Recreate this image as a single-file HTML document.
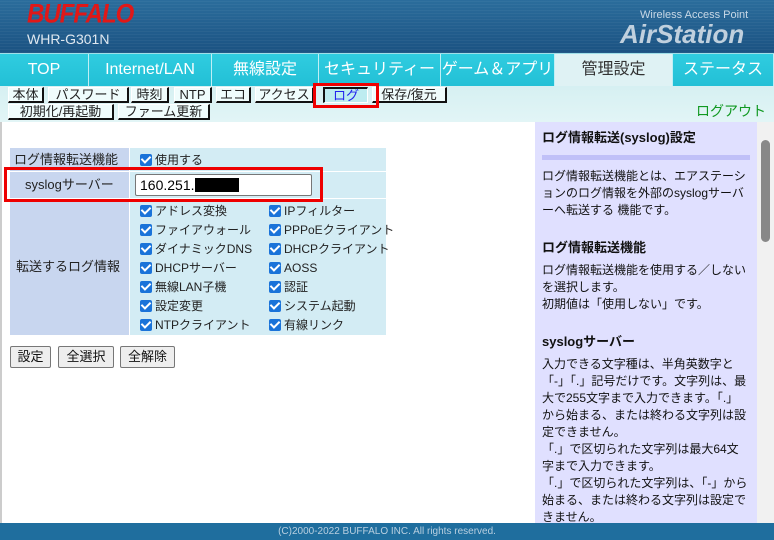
<!DOCTYPE html>
<html><head><meta charset="utf-8"><style>
*{margin:0;padding:0;box-sizing:border-box}
body{width:774px;height:540px;overflow:hidden;position:relative;font-family:"Liberation Sans","Noto Sans CJK JP",sans-serif;background:#fff}
.a{position:absolute}
#hdr{left:0;top:0;width:774px;height:53px;background-image:repeating-linear-gradient(0deg,rgba(255,255,255,.04) 0 1px,transparent 1px 3px),linear-gradient(180deg,#2b6d9c,#1b5282)}
.tab{position:absolute;top:54px;height:32px;background:linear-gradient(#30cce0,#22c0d6);color:#fff;font-size:16px;text-align:center;line-height:32px;border-right:1px solid #bfeff5}
.sb{position:absolute;height:16px;background:#effcfc;border-top:1px solid #fff;border-left:1px solid #fff;border-right:2px solid #111;border-bottom:2px solid #111;font-size:13px;line-height:13px;text-align:center;color:#222;overflow:hidden;white-space:nowrap}
.ck{display:inline-block;width:12px;height:12px;background:#1a73d9;border-radius:2px;vertical-align:-2px;margin-right:3px;position:relative}
.ck:after{content:"";position:absolute;left:3px;top:0px;width:4px;height:7px;border:solid #fff;border-width:0 2px 2px 0;transform:rotate(45deg)}
.it{position:absolute;font-size:12px;line-height:15px;height:15px;color:#222;white-space:nowrap}
.btn{position:absolute;top:346px;height:22px;border:1px solid #777;border-radius:2px;background:#eee;font-size:13px;line-height:20px;text-align:center;color:#111}
#rp{left:535px;top:122px;width:222px;height:401px;overflow:hidden;background:#e0e0ff;font-size:12px;color:#111;padding:0 7px;line-height:17px}
#rp h4{font-size:13px;margin-top:7px;font-weight:bold}
#rp p{margin-top:6px}
</style></head><body>
<div id="hdr" class="a"></div>
<div class="a" style="left:27px;top:1px;color:#e01818;font-size:24px;font-weight:bold;font-style:italic;letter-spacing:-1px;transform:scaleY(1.1)">BUFFALO</div>
<div class="a" style="left:27px;top:31px;color:#dfe8f0;font-size:14px">WHR-G301N</div>
<div class="a" style="left:640px;top:9px;color:#c8d8e6;font-size:11px">Wireless Access Point</div>
<div class="a" style="left:620px;top:19px;color:#c0d0de;font-size:26px;font-weight:bold;font-style:italic">AirStation</div>
<div class="a" style="left:0;top:53px;width:774px;height:1px;background:#9fdfe8"></div>
<div class="tab" style="left:0;width:89px">TOP</div>
<div class="tab" style="left:89px;width:123px">Internet/LAN</div>
<div class="tab" style="left:212px;width:107px">無線設定</div>
<div class="tab" style="left:319px;width:122px">セキュリティー</div>
<div class="tab" style="left:441px;width:114px">ゲーム＆アプリ</div>
<div class="tab" style="left:555px;width:118px;background:#dff2f4;color:#333">管理設定</div>
<div class="tab" style="left:673px;width:101px">ステータス</div>
<div class="a" style="left:0;top:86px;width:774px;height:36px;background:linear-gradient(#d6f0f2,#e2f5f6)"></div>
<div class="sb" style="left:8px;top:87px;width:36px">本体</div>
<div class="sb" style="left:48px;top:87px;width:81px">パスワード</div>
<div class="sb" style="left:131px;top:87px;width:38px">時刻</div>
<div class="sb" style="left:174px;top:87px;width:38px">NTP</div>
<div class="sb" style="left:216px;top:87px;width:35px">エコ</div>
<div class="sb" style="left:255px;top:87px;width:59px">アクセス</div>
<div class="sb" style="left:323px;top:87px;width:45px;background:#bdecf0;border-top:2px solid #111;border-left:2px solid #111;border-right:1px solid #fff;border-bottom:1px solid #fff;color:#2222ee">ログ</div>
<div class="sb" style="left:372px;top:87px;width:75px">保存/復元</div>
<div class="sb" style="left:8px;top:104px;width:106px">初期化/再起動</div>
<div class="sb" style="left:118px;top:104px;width:92px">ファーム更新</div>
<div class="a" style="left:313px;top:83px;width:66px;height:25px;border:3px solid #e00"></div>
<div class="a" style="left:696px;top:101px;color:#119922;font-size:14px">ログアウト</div>
<div class="a" style="left:0;top:122px;width:2px;height:401px;background:#ccc"></div>

<div class="a" style="left:10px;top:148px;width:119px;height:187px;background:#c8d6ef"></div>
<div class="a" style="left:130px;top:148px;width:256px;height:187px;background:#d3ecf4"></div>
<div class="a" style="left:10px;top:171px;width:376px;height:1px;background:#fff"></div>
<div class="a" style="left:10px;top:198px;width:376px;height:1px;background:#fff"></div>
<div class="it" style="left:14px;top:152px;font-size:13px">ログ情報転送機能</div>
<div class="it" style="left:25px;top:177px;font-size:13px">syslogサーバー</div>
<div class="it" style="left:16px;top:259px;font-size:13px">転送するログ情報</div>
<div class="it" style="left:140px;top:153px"><span class="ck"></span>使用する</div>
<div class="a" style="left:135px;top:174px;width:177px;height:22px;border:1px solid #777;border-radius:2px;background:#fff;font-size:14px;line-height:20px;padding-left:4px">160.251.<span style="display:inline-block;width:44px;height:14px;background:#000;vertical-align:-2px"></span></div>
<div class="a" style="left:4px;top:167px;width:319px;height:35px;border:3px solid #e00"></div>
<div class="it" style="left:140px;top:204px"><span class="ck"></span>アドレス変換</div>
<div class="it" style="left:140px;top:223px"><span class="ck"></span>ファイアウォール</div>
<div class="it" style="left:140px;top:242px"><span class="ck"></span>ダイナミックDNS</div>
<div class="it" style="left:140px;top:261px"><span class="ck"></span>DHCPサーバー</div>
<div class="it" style="left:140px;top:280px"><span class="ck"></span>無線LAN子機</div>
<div class="it" style="left:140px;top:299px"><span class="ck"></span>設定変更</div>
<div class="it" style="left:140px;top:318px"><span class="ck"></span>NTPクライアント</div>
<div class="it" style="left:269px;top:204px"><span class="ck"></span>IPフィルター</div>
<div class="it" style="left:269px;top:223px"><span class="ck"></span>PPPoEクライアント</div>
<div class="it" style="left:269px;top:242px"><span class="ck"></span>DHCPクライアント</div>
<div class="it" style="left:269px;top:261px"><span class="ck"></span>AOSS</div>
<div class="it" style="left:269px;top:280px"><span class="ck"></span>認証</div>
<div class="it" style="left:269px;top:299px"><span class="ck"></span>システム起動</div>
<div class="it" style="left:269px;top:318px"><span class="ck"></span>有線リンク</div>
<div class="btn" style="left:10px;width:41px">設定</div>
<div class="btn" style="left:58px;width:56px">全選択</div>
<div class="btn" style="left:120px;width:55px">全解除</div>

<div id="rp" class="a">
<h4>ログ情報転送(syslog)設定</h4>
<div style="height:5px;background:#c0c0f8;margin:9px 0 8px"></div>
<div>ログ情報転送機能とは、エアステーションのログ情報を外部のsyslogサーバーへ転送する 機能です。</div>
<h4 style="margin-top:20px">ログ情報転送機能</h4>
<p>ログ情報転送機能を使用する／しないを選択します。<br>初期値は「使用しない」です。</p>
<h4 style="margin-top:20px">syslogサーバー</h4>
<p>入力できる文字種は、半角英数字と「-」「.」記号だけです。文字列は、最大で255文字まで入力できます。「.」から始まる、または終わる文字列は設定できません。<br>「.」で区切られた文字列は最大64文字まで入力できます。<br>「.」で区切られた文字列は、「-」から始まる、または終わる文字列は設定できません。<br>初期値は空欄です。</p>
</div>
<div class="a" style="left:757px;top:122px;width:17px;height:401px;background:#f1f1f1"></div>
<div class="a" style="left:761px;top:140px;width:9px;height:102px;background:#888;border-radius:5px"></div>
<div class="a" style="left:0;top:523px;width:774px;height:17px;background:#1f6e9e;color:#b8cfe0;font-size:10px;text-align:center;line-height:17px">(C)2000-2022 BUFFALO INC. All rights reserved.</div>
</body></html>
